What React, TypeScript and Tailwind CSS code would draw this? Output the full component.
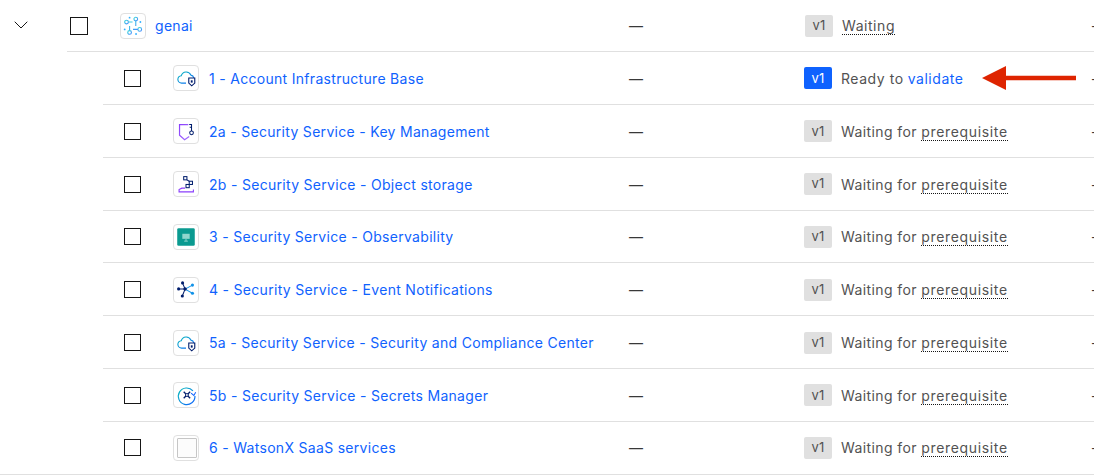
import { ReactNode } from 'react'
import { ChevronDown } from 'lucide-react'

const gradient = (id: string, from: string, to: string) => (
  <defs>
    <linearGradient id={id} x1="0" y1="0" x2="1" y2="1">
      <stop offset="0%" stopColor={from} />
      <stop offset="100%" stopColor={to} />
    </linearGradient>
  </defs>
)

const GenaiIcon = () => (
  <svg viewBox="0 0 26 26" className="h-full w-full" fill="none">
    {gradient('genai', '#3ddbd9', '#4589ff')}
    <g stroke="url(#genai)" strokeWidth="1.2">
      <circle cx="6" cy="8.7" r="2" />
      <circle cx="16" cy="5.5" r="2" />
      <circle cx="9.3" cy="20" r="2" />
      <circle cx="20.3" cy="16.7" r="2" />
      <path d="M8 8.7h4.5M16 7.5v5.5M9.3 18v-5M18.3 16.7H13" />
    </g>
    <g fill="#33b1ff">
      <circle cx="9.3" cy="4" r="1" />
      <circle cx="21" cy="8.7" r="1" />
      <circle cx="4" cy="16.7" r="1" />
      <circle cx="16.3" cy="21.7" r="1" />
    </g>
  </svg>
)

const CloudIcon = ({ id }: { id: string }) => (
  <svg viewBox="0 0 26 26" className="h-full w-full" fill="none">
    {gradient(id, '#08bdba', '#0f62fe')}
    <path
      d="M13 18.5H8.5a4 4 0 0 1-.6-8a5.5 5.5 0 0 1 10.4-.6A4 4 0 0 1 21.5 13"
      stroke={`url(#${id})`}
      strokeWidth="1.2"
    />
    <path d="M16 13h6.5v5.5L19.2 21.5L16 18.5z" fill="#fff" stroke="#001d6c" strokeWidth="1.2" />
    <rect x="18.2" y="15.5" width="2" height="2.5" fill="#001d6c" />
  </svg>
)

const KeyIcon = () => (
  <svg viewBox="0 0 26 26" className="h-full w-full" fill="none">
    {gradient('shield', '#8a3ffc', '#a56eff')}
    <path d="M15.5 6H6v11.5L11.5 22.5l5-3.5" stroke="url(#shield)" strokeWidth="1.3" />
    <path d="M16.5 6H19v7M17 9h2" stroke="#001d6c" strokeWidth="1.1" />
    <circle cx="19" cy="15" r="2" stroke="#001d6c" strokeWidth="1.1" />
  </svg>
)

const StorageIcon = () => (
  <svg viewBox="0 0 26 26" className="h-full w-full" fill="none">
    <g stroke="#001d6c" strokeWidth="1.1">
      <rect x="10.5" y="5" width="3.5" height="3.5" />
      <rect x="16.5" y="10" width="3.5" height="3.5" />
      <rect x="13" y="13.5" width="3.5" height="3.5" />
      <path d="M14 8.5 16.5 10" />
    </g>
    <path d="M21 19v2.5H5.5v-2.5l3-1.5H12" stroke="#8a3ffc" strokeWidth="1.2" />
  </svg>
)

const ObservabilityIcon = () => (
  <svg viewBox="0 0 26 26" className="h-full w-full" fill="none">
    <rect x="3.5" y="3.5" width="19" height="19" rx="1.5" fill="#0a9a90" />
    <path d="M9 9.5h8v5.5H9z" fill="#8fd6cd" />
    <path d="M13 15v2.5M11 17.5h4" stroke="#8fd6cd" strokeWidth="1" />
  </svg>
)

const EventsIcon = () => (
  <svg viewBox="0 0 26 26" className="h-full w-full" fill="none">
    <g stroke="#001d6c" strokeWidth="1.1">
      <path d="M9.3 5.5 12 12 5 12M12 12 9 19.5" />
    </g>
    <g stroke="#1192e8" strokeWidth="1.1">
      <path d="M12 12 20 7.7M12 12 20 16.5" />
    </g>
    <g fill="#001d6c">
      <circle cx="9.3" cy="5.3" r="1.7" />
      <circle cx="5" cy="11.8" r="1.7" />
      <circle cx="9" cy="19.5" r="1.7" />
      <circle cx="12" cy="12" r="1.9" />
    </g>
    <g fill="#1192e8">
      <circle cx="20" cy="7.7" r="1.7" />
      <circle cx="20" cy="16.5" r="1.7" />
    </g>
  </svg>
)

const SecretsIcon = () => (
  <svg viewBox="0 0 26 26" className="h-full w-full" fill="none">
    {gradient('secrets', '#08bdba', '#0f62fe')}
    <path d="M20.5 8.5A9 9 0 1 0 22.7 14" stroke="url(#secrets)" strokeWidth="1.3" />
    <path d="M18.5 11l3 2.5 2-3.5" stroke="#0f62fe" strokeWidth="1.1" />
    <path d="M10.5 9.5l7 7M17.5 9.5l-7 7" stroke="#001d6c" strokeWidth="1.4" />
    <circle cx="14" cy="13" r="1.6" fill="#fff" stroke="#001d6c" />
  </svg>
)

const BlankIcon = () => (
  <div className="mx-[3px] my-[2px] h-5 w-5 rounded-[1px] border border-[#c6c6c6] bg-[#fcfcfc]" />
)

function Status({ ready, short }: { ready?: boolean; short?: boolean }) {
  return (
    <div className="flex items-center tracking-[0.55px]">
      <span
        className={`flex h-[22px] w-[28px] items-center justify-center rounded-[2px] text-[13px] tracking-[0.3px] ${
          ready ? 'bg-[#0f62fe] text-white' : 'bg-[#e0e0e0] text-[#525252]'
        }`}
      >
        v1
      </span>
      {ready ? (
        <>
          <span className="ml-[9px] text-[#525252]">Ready to</span>
          <span className="ml-[4px] text-[#0f62fe]">validate</span>
          <svg width="95" height="26" viewBox="0 0 95 26" className="ml-[18px]">
            <path d="M94 10.7H24V1L0 13l24 12v-9.7h70z" fill="#de2400" />
          </svg>
        </>
      ) : (
        <span className="ml-[9px] text-[#525252]">
          {short ? (
            <span className="border-b border-dotted border-[#161616]">Waiting</span>
          ) : (
            <span className="tracking-[0.4px]">
              Waiting for{' '}
              <span className="border-b border-dotted border-[#161616] tracking-[0.65px]">prerequisite</span>
            </span>
          )}
        </span>
      )}
    </div>
  )
}

function Row({
  icon,
  name,
  ready,
}: {
  icon: ReactNode
  name: string
  ready?: boolean
}) {
  return (
    <div className="ml-[103px] flex h-[52.85px] items-center border-b border-[#e0e0e0] pt-px last:h-[52px] last:border-transparent">
      <span className="ml-[21px] h-[17px] w-[17px] border border-[#161616]" />
      <span className="ml-[32px] h-[26px] w-[26px] rounded-[4px] border border-[#e0e0e0]">{icon}</span>
      <a className="ml-[10px] flex-1 text-[#0f62fe]">{name}</a>
      <span className="w-[175px]">—</span>
      <div className="w-[287px]">
        <Status ready={ready} />
      </div>
      <span className="w-[3px]">-</span>
    </div>
  )
}

export default function App() {
  return (
    <div className="h-[475px] w-[1094px] overflow-hidden bg-white font-['Inter',sans-serif] text-[14px] tracking-[0.3px] text-[#393939]">
      <div className="flex h-[52px]">
        <div className="flex w-[67px] items-center pb-[2px]">
          <ChevronDown className="ml-[9px] h-6 w-6 text-[#161616]" strokeWidth={1} />
        </div>
        <div className="flex flex-1 items-center border-b border-[#e0e0e0]">
          <span className="ml-[3px] h-[18px] w-[18px] border border-[#161616]" />
          <span className="ml-[32px] h-[26px] w-[26px] rounded-[4px] border border-[#e0e0e0]">
            <GenaiIcon />
          </span>
          <a className="ml-[9px] flex-1 text-[#0f62fe]">genai</a>
          <span className="w-[176px]">—</span>
          <div className="w-[286px]">
            <Status short />
          </div>
          <span className="w-[3px]">-</span>
        </div>
      </div>
      <div className="border-b border-[#e0e0e0]">
        <Row icon={<CloudIcon id="cloud-a" />} name="1 - Account Infrastructure Base" ready />
        <Row icon={<KeyIcon />} name="2a - Security Service - Key Management" />
        <Row icon={<StorageIcon />} name="2b - Security Service - Object storage" />
        <Row icon={<ObservabilityIcon />} name="3 - Security Service - Observability" />
        <Row icon={<EventsIcon />} name="4 - Security Service - Event Notifications" />
        <Row icon={<CloudIcon id="cloud-b" />} name="5a - Security Service - Security and Compliance Center" />
        <Row icon={<SecretsIcon />} name="5b - Security Service - Secrets Manager" />
        <Row icon={<BlankIcon />} name="6 - WatsonX SaaS services" />
      </div>
    </div>
  )
}
